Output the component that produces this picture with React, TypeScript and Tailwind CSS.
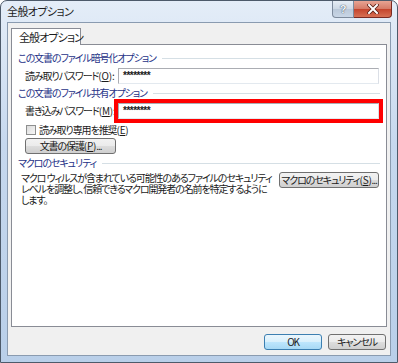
import React from 'react';

const jp =
  "font-['Meiryo_UI','Noto_Sans_CJK_JP',sans-serif] [font-feature-settings:'palt'] whitespace-nowrap";

function GroupHeader({ label }: { label: string }) {
  return (
    <div className="flex h-[12px] items-center">
      <span className="shrink-0 leading-none text-[#1e3287]">{label}</span>
      <div className="ml-[6px] h-px flex-1 bg-[#d5dfe5]" />
    </div>
  );
}

// "(O)" style access key, underlined letter
function Mnemonic({ ch }: { ch: string }) {
  return (
    <span className="tracking-[-0.2px]">
      (<span className="underline decoration-1 underline-offset-1">{ch}</span>)
    </span>
  );
}

function WinButton({
  children,
  className = '',
  isDefault = false,
}: {
  children: React.ReactNode;
  className?: string;
  isDefault?: boolean;
}) {
  return (
    <button
      className={`flex h-[16px] shrink-0 items-center justify-center overflow-hidden rounded-[3px] border leading-none text-[#1b1b1b] ${
        isDefault
          ? 'border-[#3c7fb1] bg-[linear-gradient(#eaf6fd_0%,#d9f0fc_50%,#bee6fd_51%,#a7d9f5_100%)]'
          : 'border-[#707070] bg-[linear-gradient(#f2f2f2_0%,#ebebeb_50%,#dddddd_51%,#cfcfcf_100%)]'
      } ${className}`}
    >
      {children}
    </button>
  );
}

function Field({ highlight = false }: { highlight?: boolean }) {
  return (
    <div
      className={`flex h-[16px] flex-1 items-center border border-[#abadb3] border-r-[#dbdfe6] border-b-[#e3e9ef] bg-white pl-[4px] ${
        highlight ? 'outline-4 outline-[#ff0000]' : ''
      }`}
    >
      <span className="font-['Liberation_Sans',sans-serif] text-[10px] font-bold leading-none tracking-[-0.5px] text-[#1b1b1b]">
        ********
      </span>
    </div>
  );
}

export default function App() {
  return (
    <div className={`${jp} flex h-[363px] w-[398px] flex-col overflow-hidden rounded-t-[7px] border border-[#4d5a6a] bg-[linear-gradient(#e4edf8,#c6d8ee_40%,#b9cfe9)] text-[10px] tracking-[-1.1px] text-[#1b1b1b]`}>
      {/* title bar */}
      <div className="flex h-[21px] shrink-0 items-start">
        <span className="ml-[6px] mt-[5px] text-[11px] leading-none tracking-[-0.6px] text-[#1b1b1b]">全般オプション</span>
        <div className="ml-auto mr-[5px] flex tracking-normal">
          <div className="flex h-[17px] w-[22px] items-center justify-center rounded-bl-[4px] border border-t-0 border-[#7d8a9c] bg-[linear-gradient(#e6edf5,#cdd8e5_50%,#bac8d9_51%,#c9d6e6)] font-['Liberation_Sans',sans-serif] text-[11px] font-bold leading-none text-[#f4f7fa] [text-shadow:0_0_1px_#44546a,0_0_1px_#44546a]">
            ?
          </div>
          <div className="flex h-[17px] w-[38px] items-center justify-center rounded-br-[4px] border border-l-0 border-t-0 border-[#7a2a22] bg-[linear-gradient(#e8a493,#d57a66_50%,#c4442c_51%,#d77054)]">
            <svg width="12" height="10" viewBox="0 0 12 10">
              <path d="M2 1 L10 9 M10 1 L2 9" stroke="#5a1d12" strokeWidth="3.6" strokeLinecap="square" />
              <path d="M2 1 L10 9 M10 1 L2 9" stroke="#ffffff" strokeWidth="2" strokeLinecap="square" />
            </svg>
          </div>
        </div>
      </div>

      {/* client */}
      <div className="mx-[6px] mb-[6px] flex flex-1 flex-col border border-[#8a9bb0] bg-[#f0f0f0] px-[3px]">
        <div className="mt-[5px] flex">
          <div className="relative z-10 -mb-px flex h-[17px] w-[70px] items-center border border-b-0 border-[#898c95] bg-white pl-[7px] text-[11px] leading-none tracking-[-0.9px]">
            全般オプション
          </div>
        </div>
        <div className="flex h-[283px] flex-col border border-[#898c95] bg-white px-[6px] pt-[7px]">
          <GroupHeader label="この文書のファイル暗号化オプション" />
          <div className="mt-[4px] flex items-center pl-[7px] pr-[1px]">
            <span className="w-[93px] shrink-0 leading-none">
              読み取りパスワード<Mnemonic ch="O" />:
            </span>
            <Field />
          </div>

          <div className="mt-[3px]">
            <GroupHeader label="この文書のファイル共有オプション" />
          </div>
          <div className="mt-[4px] flex items-center pl-[7px] pr-[1px]">
            <span className="w-[93px] shrink-0 leading-none">
              書き込みパスワード<Mnemonic ch="M" />:
            </span>
            <Field highlight />
          </div>

          <div className="mt-[5px] flex h-[12px] items-center pl-[8px]">
            <div className="h-[10px] w-[10px] border border-[#8e8f8f] bg-[linear-gradient(135deg,#dcdcdc,#f6f6f6)]" />
            <span className="ml-[3px] leading-none">
              読み取り専用を推奨<Mnemonic ch="E" />
            </span>
          </div>

          <div className="mt-[2px] flex pl-[7px]">
            <WinButton className="w-[91px]">
              文書の保護<Mnemonic ch="P" />...
            </WinButton>
          </div>

          <div className="mt-[3px]">
            <GroupHeader label="マクロのセキュリティ" />
          </div>
          <div className="mt-[3px] flex items-start pl-[3px] pr-[1px]">
            <p className="min-w-0 flex-1 leading-[11px]">
              マクロ ウィルスが含まれている可能性のあるファイルのセキュリティ
              <br />
              レベルを調整し、信頼できるマクロ開発者の名前を特定するように
              <br />
              します。
            </p>
            <WinButton className="ml-[4px] w-[100px]">
              マクロのセキュリティ<Mnemonic ch="S" />...
            </WinButton>
          </div>
        </div>

        <div className="mt-[7px] flex justify-end gap-[6px] pr-[1px]">
          <WinButton isDefault className="w-[58px]">
            OK
          </WinButton>
          <WinButton className="w-[58px]">キャンセル</WinButton>
        </div>
      </div>
    </div>
  );
}
